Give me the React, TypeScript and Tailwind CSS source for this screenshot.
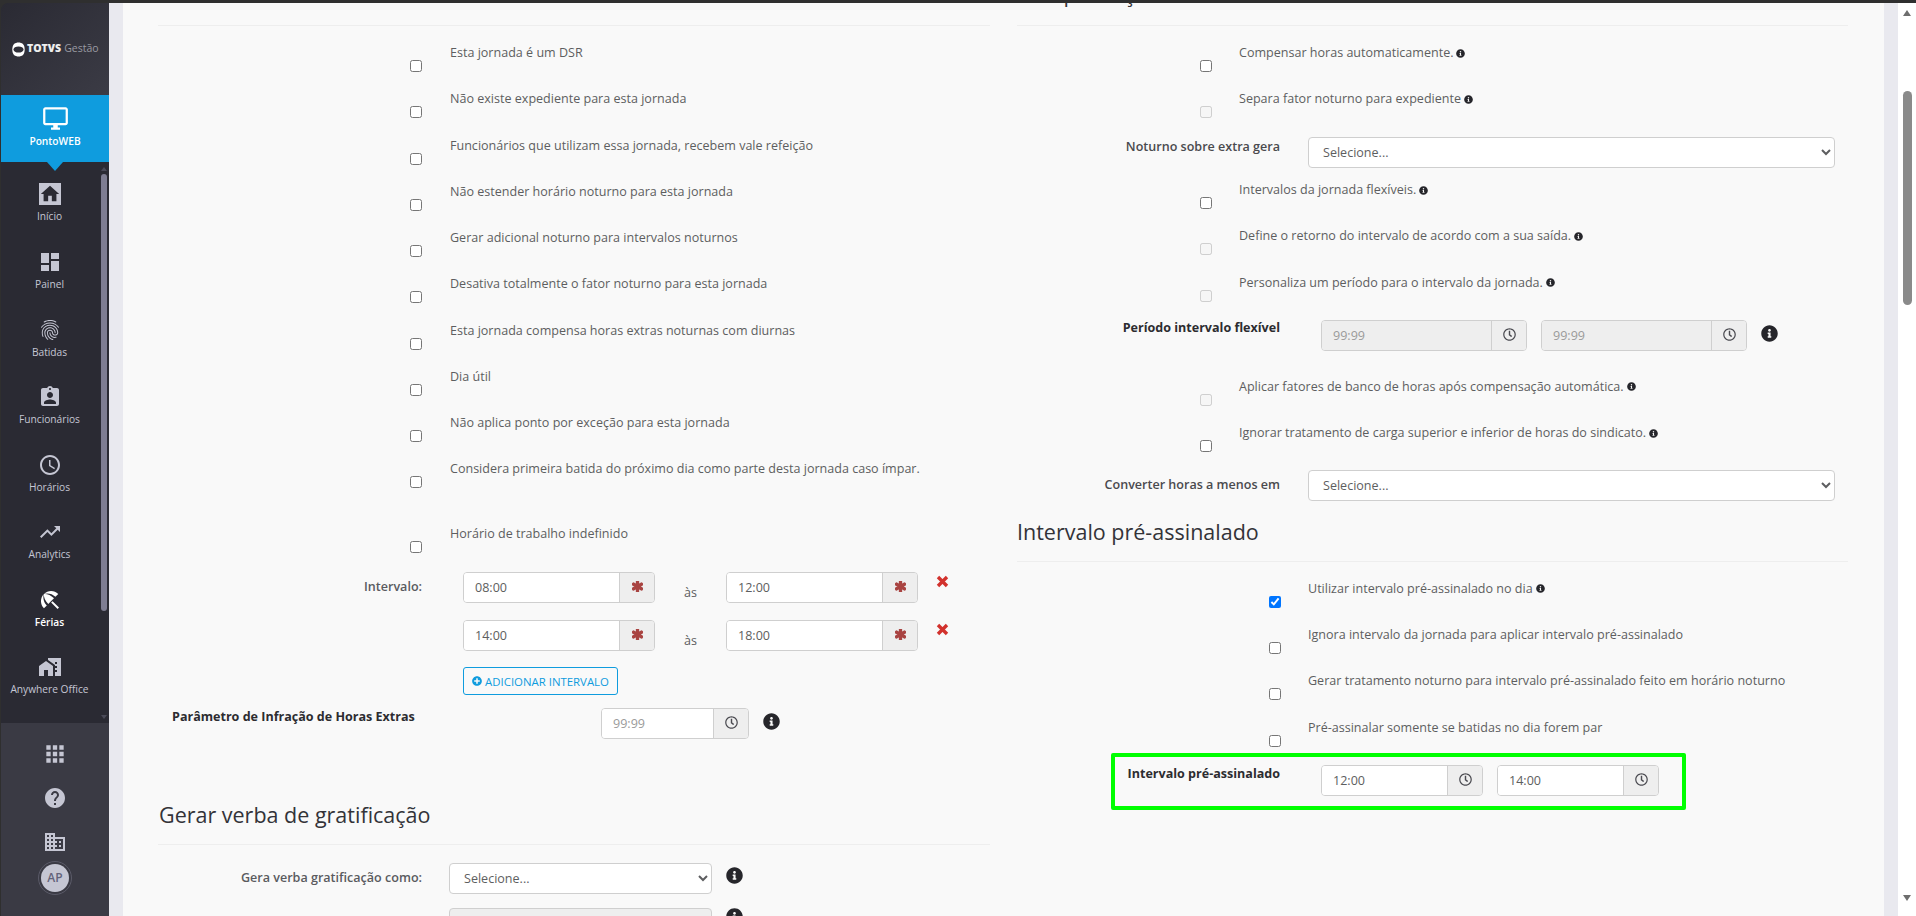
import type { ReactNode } from 'react'
import { FaAsterisk, FaInfoCircle, FaPlusCircle, FaRegClock } from 'react-icons/fa'
import {
  MdApps, MdBeachAccess, MdDashboard, MdOutlineDesktopWindows, MdDomain, MdFingerprint,
  MdHelp, MdHome, MdMapsHomeWork, MdSchedule, MdTrendingUp, MdAssignmentInd,
} from 'react-icons/md'

const FONT = "font-['Open_Sans','Noto_Sans',sans-serif]"

const LEFT_CHECKS = [
  'Esta jornada é um DSR',
  'Não existe expediente para esta jornada',
  'Funcionários que utilizam essa jornada, recebem vale refeição',
  'Não estender horário noturno para esta jornada',
  'Gerar adicional noturno para intervalos noturnos',
  'Desativa totalmente o fator noturno para esta jornada',
  'Esta jornada compensa horas extras noturnas com diurnas',
  'Dia útil',
  'Não aplica ponto por exceção para esta jornada',
]

const MENU = [
  { label: 'Painel', icon: <MdDashboard size={24} /> },
  { label: 'Batidas', icon: <MdFingerprint size={24} /> },
  { label: 'Funcionários', icon: <MdAssignmentInd size={24} /> },
  { label: 'Horários', icon: <MdSchedule size={24} /> },
  { label: 'Analytics', icon: <MdTrendingUp size={24} /> },
  { label: 'Férias', icon: <MdBeachAccess size={24} className="text-white" />, active: true },
  { label: 'Anywhere Office', icon: <MdMapsHomeWork size={24} /> },
]

function MenuItem({ label, icon, active }: { label: string; icon: ReactNode; active?: boolean }) {
  return (
    <div className="flex h-[67.5px] flex-col items-center">
      <div className="flex h-[24px] items-center justify-center text-[#c5c6d3]">{icon}</div>
      <span className={`mt-[2px] whitespace-nowrap text-[10.2px] leading-[16px] ${active ? 'font-semibold text-white' : 'font-medium text-[#c5c6d3]'}`}>
        {label}
      </span>
    </div>
  )
}

function Sidebar() {
  return (
    <aside className="ml-px flex h-full w-[108px] shrink-0 flex-col overflow-hidden rounded-tl-lg bg-[#2a2a33]">
      <div className="flex h-[92px] shrink-0 items-center bg-gradient-to-br from-[#2a2a33] to-[#3b3b45] pl-[11px]">
        <svg width="13" height="15" viewBox="0 0 13 15" className="shrink-0">
          <path d="M6.5.5C10 .5 12.7 2.4 12.7 7.5S10 14.5 6.5 14.5.3 12.6.3 7.5 3 .5 6.5.5Z" fill="#fff" />
          <ellipse cx="6.5" cy="7.5" rx="5" ry="3.1" fill="#2f2f38" />
        </svg>
        <span className="ml-[2px] text-[10.5px] font-extrabold text-[#eeeeee]">TOTVS</span>
        <span className="ml-[3px] text-[10.5px] text-[#9a9aa2]">Gestão</span>
      </div>
      <div className="relative h-[67px] shrink-0 bg-[#0f9cde] pt-[10px] text-center text-white">
        <MdOutlineDesktopWindows size={27} className="mx-auto" />
        <div className="mt-[2px] text-[10.2px] font-semibold leading-[14px]">PontoWEB</div>
        <div className="absolute left-[46px] top-[67px] h-0 w-0 border-x-[8px] border-t-[9px] border-x-transparent border-t-[#0f9cde]" />
      </div>
      <div className="relative flex h-[561px] shrink-0">
        <div className="w-[97px] shrink-0 pt-[21px]">
          <div className="flex h-[67px] flex-col items-center">
            <div className="flex h-[22px] w-[22px] items-center justify-center bg-[#c5c6d3] text-[#2a2a33]">
              <MdHome size={22} />
            </div>
            <span className="mt-[3px] text-[10.2px] font-medium leading-[16px] text-[#c5c6d3]">Início</span>
          </div>
          {MENU.map((m) => (
            <MenuItem key={m.label} {...m} />
          ))}
        </div>
        <div className="flex w-[11px] flex-col items-center">
          <div className="mt-[5px] h-0 w-0 border-x-[3px] border-b-[4px] border-x-transparent border-b-[#4a4a58]" />
          <div className="mt-[3px] h-[437px] w-[6px] rounded-full bg-[#7e7d92]" />
          <div className="mt-[104px] h-0 w-0 border-x-[3px] border-t-[4px] border-x-transparent border-t-[#4a4a58]" />
        </div>
      </div>
      <div className="flex flex-1 flex-col items-center bg-[#3a3a44] text-[#c5c6d3]">
        <MdApps size={26} className="mt-[18px]" />
        <MdHelp size={24} className="mt-[19px]" />
        <MdDomain size={24} className="mt-[20px]" />
        <div className="mt-[7px] flex h-[34px] w-[34px] items-center justify-center rounded-full border border-[#5a5a68]">
          <div className="flex h-[28px] w-[28px] items-center justify-center rounded-full bg-[#c5c6d3] text-[12px] font-semibold text-[#62627a]">
            AP
          </div>
        </div>
      </div>
    </aside>
  )
}

function Info({ size = 9 }: { size?: number }) {
  return <FaInfoCircle size={size} className="block shrink-0 text-[#26262b]" />
}

function RemoveIcon() {
  return (
    <svg width="13" height="13" viewBox="0 0 13 13" className="ml-[18px] mt-[3px] shrink-0 text-[#d2322d]">
      <path d="M2 2L11 11M11 2L2 11" stroke="currentColor" strokeWidth="3.4" />
    </svg>
  )
}

function CheckRow({ label, info, h = 46.25, disabled, checked, cbLeft = 252, gap = 28 }: {
  label: string; info?: boolean; h?: number; disabled?: boolean; checked?: boolean; cbLeft?: number; gap?: number
}) {
  return (
    <div className="flex items-start" style={{ height: h, paddingLeft: cbLeft }}>
      <input type="checkbox" readOnly disabled={disabled} checked={!!checked} className="mt-[34px] h-[12px] w-[12px] shrink-0" style={{ marginRight: gap }} />
      <div className="mt-[17px] flex items-center gap-[3px] whitespace-nowrap text-[12.56px] leading-[20px] text-[#5d5e60]">
        {label}
        {info && <Info />}
      </div>
    </div>
  )
}

function TimeInput({ value, placeholder, w, addon = 35, disabled, red }: {
  value?: string; placeholder?: string; w: number; addon?: number; disabled?: boolean; red?: boolean
}) {
  return (
    <div className="flex h-[31px] shrink-0 overflow-hidden rounded-[4px] border border-[#cfcfcf]" style={{ width: w }}>
      <input
        readOnly
        value={value ?? ''}
        placeholder={placeholder}
        className={`min-w-0 flex-1 px-[11px] pt-[2px] text-[12.56px] text-[#5d5e60] outline-none placeholder:text-[#9b9b9b] ${disabled ? 'bg-[#eeeeee]' : 'bg-white'}`}
      />
      <div className="flex shrink-0 items-center justify-center border-l border-[#cfcfcf] bg-[#eeeeee] pb-[2px]" style={{ width: addon }}>
        {red ? <FaAsterisk size={11} stroke="currentColor" strokeWidth={70} className="text-[#a94442]" /> : <FaRegClock size={13} className="text-[#4a4a50]" />}
      </div>
    </div>
  )
}

function SelectBox({ w, disabled }: { w: number; disabled?: boolean }) {
  return (
    <select
      disabled={disabled}
      className={`h-[31px] shrink-0 rounded-[4px] border border-[#cfcfcf] px-[10px] text-[12.56px] text-[#5d5e60] ${disabled ? 'bg-[#eeeeee]' : 'bg-white'}`}
      style={{ width: w }}
    >
      <option>Selecione...</option>
    </select>
  )
}

function SideLabel({ children, w, strong, semi, medium }: { children: ReactNode; w: number; strong?: boolean; semi?: boolean; medium?: boolean }) {
  return (
    <div
      className={`shrink-0 whitespace-nowrap text-right text-[12.56px] leading-[20px] ${strong ? 'font-bold text-[#2c2c30]' : semi ? 'font-semibold text-[#4a4a4e]' : medium ? 'font-semibold text-[#5a5b5f]' : 'text-[#5d5e60]'}`}
      style={{ width: w }}
    >
      {children}
    </div>
  )
}

function Heading({ children, className }: { children: ReactNode; className?: string }) {
  return (
    <div className={`border-b border-[#eeeeee] text-[21.5px] leading-[30px] text-[#333338] ${className ?? ''}`}>
      {children}
    </div>
  )
}

function LeftColumn() {
  return (
    <div className="w-[832px] shrink-0">
      <div className="mt-[22px] h-px bg-[#eeeeee]" />
      {LEFT_CHECKS.map((label) => (
        <CheckRow key={label} label={label} />
      ))}
      <CheckRow label="Considera primeira batida do próximo dia como parte desta jornada caso ímpar." h={65} />
      <CheckRow label="Horário de trabalho indefinido" h={46} />

      <div className="mt-[19px] flex">
        <div className="pt-[5px]"><SideLabel w={264} medium>Intervalo:</SideLabel></div>
        <div className="ml-[41px]">
          {['08:00|12:00', '14:00|18:00'].map((pair, i) => (
            <div key={pair} className={`flex ${i ? 'mt-[17px]' : ''}`}>
              <TimeInput value={pair.split('|')[0]} w={192} red />
              <span className="mt-[11px] w-[71px] text-center text-[12.56px] leading-[20px] text-[#5d5e60]">às</span>
              <TimeInput value={pair.split('|')[1]} w={192} red />
              <RemoveIcon />
            </div>
          ))}
          <button className="mt-[16px] flex h-[28px] w-[155px] items-center justify-center gap-[3px] rounded-[3px] border border-[#0f9cde] text-[11.4px] font-medium text-[#0f9cde]">
            <FaPlusCircle size={10} />
            ADICIONAR INTERVALO
          </button>
        </div>
      </div>

      <div className="mt-[13px] flex">
        <div className="ml-[14px] -mt-px w-[429px] whitespace-nowrap text-[12.56px] font-bold leading-[20px] text-[#2c2c30]">
          Parâmetro de Infração de Horas Extras
        </div>
        <TimeInput placeholder="99:99" w={148} />
        <div className="ml-[14px] pt-[5px]"><Info size={17} /></div>
      </div>

      <Heading className="mt-[61px] pb-[14px] pl-px">Gerar verba de gratificação</Heading>

      <div className="mt-[18px] flex">
        <div className="pt-[5px]"><SideLabel w={264} medium>Gera verba gratificação como:</SideLabel></div>
        <div className="ml-[27px]"><SelectBox w={263} /></div>
        <div className="ml-[14px] pt-[4px]"><Info size={17} /></div>
      </div>
      <div className="mt-[14px] flex pl-[291px]">
        <SelectBox w={263} disabled />
        <div className="ml-[14px]"><Info size={17} /></div>
      </div>
    </div>
  )
}

function RightColumn() {
  return (
    <div className="ml-[27px] w-[831px] shrink-0">
      {/* titulo cortado pelo scroll */}
      <Heading className="-mt-[29px] h-[52px] pt-[5px]">Compensação</Heading>
      <CheckRow label="Compensar horas automaticamente." info cbLeft={182.5} gap={27.5} />
      <CheckRow label="Separa fator noturno para expediente" info disabled cbLeft={182.5} gap={27.5} />
      <div className="mt-[18.5px] flex h-[31px]">
        <SideLabel w={263} semi>Noturno sobre extra gera</SideLabel>
        <div className="ml-[28px]"><SelectBox w={527} /></div>
      </div>
      <div className="-mt-[5px]">
        <CheckRow label="Intervalos da jornada flexíveis." info cbLeft={182.5} gap={27.5} />
        <CheckRow label="Define o retorno do intervalo de acordo com a sua saída." info disabled cbLeft={182.5} gap={27.5} />
        <CheckRow label="Personaliza um período para o intervalo da jornada." info disabled cbLeft={182.5} gap={27.5} />
      </div>

      <div className="mt-[18px] flex">
        <div className="-mt-[2px]"><SideLabel w={263} strong>Período intervalo flexível</SideLabel></div>
        <div className="ml-[41px] flex gap-[14px]">
          <TimeInput placeholder="99:99" w={206} disabled />
          <TimeInput placeholder="99:99" w={206} disabled />
        </div>
        <div className="ml-[14px] pt-[5px]"><Info size={17} /></div>
      </div>

      <div className="mt-[9px]">
        <CheckRow label="Aplicar fatores de banco de horas após compensação automática." info disabled cbLeft={182.5} gap={27.5} />
        <CheckRow label="Ignorar tratamento de carga superior e inferior de horas do sindicato." info cbLeft={182.5} gap={27.5} />
      </div>

      <div className="mt-[17.5px] flex h-[31px] items-center">
        <SideLabel w={263} semi>Converter horas a menos em</SideLabel>
        <div className="ml-[28px] flex"><SelectBox w={527} /></div>
      </div>

      <Heading className="mt-[16px] pb-[14px]">Intervalo pré-assinalado</Heading>

      <CheckRow label="Utilizar intervalo pré-assinalado no dia" info checked cbLeft={252} gap={27} />
      <CheckRow label="Ignora intervalo da jornada para aplicar intervalo pré-assinalado" cbLeft={252} gap={27} />
      <CheckRow label="Gerar tratamento noturno para intervalo pré-assinalado feito em horário noturno" cbLeft={252} gap={27} />
      <CheckRow label="Pré-assinalar somente se batidas no dia forem par" cbLeft={252} gap={27} />

      <div className="mt-[18px] flex">
        <div className="-mt-px"><SideLabel w={263} strong>Intervalo pré-assinalado</SideLabel></div>
        <div className="ml-[41px] flex gap-[14px]">
          <TimeInput value="12:00" w={162} />
          <TimeInput value="14:00" w={162} />
        </div>
      </div>
    </div>
  )
}

export default function App() {
  return (
    <div className={`flex h-[916px] w-[1916px] flex-col overflow-hidden bg-[#2f2f2f] ${FONT}`}>
      <div className="h-[3px] shrink-0 bg-[#2f2f2f]" />
      <div className="flex min-h-0 flex-1">
        <Sidebar />
        <div className="w-[14px] shrink-0 bg-[#e9e9ef]" />
        <main className="relative flex min-w-0 flex-1 overflow-hidden bg-[#f9f9f9] pl-[35px]">
          <LeftColumn />
          <RightColumn />
          {/* destaque verde feito por cima do print */}
          <div className="absolute left-[988px] top-[750px] h-[57px] w-[575px] rounded-[2px] border-[4.5px] border-[#00ff00]" />
        </main>
        <div className="w-[14px] shrink-0 bg-[#e9e9ef]" />
        <div className="flex w-[18px] shrink-0 flex-col items-center bg-white">
          <div className="mt-[7px] h-0 w-0 border-x-[4px] border-b-[6px] border-x-transparent border-b-[#6e6e6e]" />
          <div className="mt-[75px] h-[214px] w-[9px] rounded-full bg-[#8a8a8a]" />
          <div className="mt-[590px] h-0 w-0 border-x-[4px] border-t-[6px] border-x-transparent border-t-[#6e6e6e]" />
        </div>
      </div>
    </div>
  )
}
